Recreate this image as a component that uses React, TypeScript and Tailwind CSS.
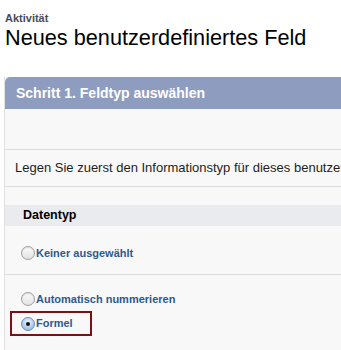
import * as React from "react";

type RadioProps = {
  label: string;
  checked?: boolean;
};

function Radio({ label, checked }: RadioProps) {
  return (
    <label className="flex items-center gap-[1px] cursor-pointer">
      {checked ? (
        <span className="flex h-[14px] w-[14px] items-center justify-center rounded-full border border-[#6a8cbc] bg-[radial-gradient(circle_at_50%_35%,#eef5fd_0%,#b4cdee_55%,#86abdb_100%)]">
          <span className="h-[4px] w-[4px] rounded-full bg-[#111]" />
        </span>
      ) : (
        <span className="h-[14px] w-[14px] rounded-full border border-[#a0a0a0] bg-[linear-gradient(#fbfbfb,#e2e2e2)] shadow-[inset_0_1px_1px_rgba(0,0,0,0.12)]" />
      )}
      <span className="text-[11px] font-bold leading-none text-[#2d5a92]">{label}</span>
    </label>
  );
}

export default function App() {
  return (
    <div className="h-[350px] w-[341px] overflow-hidden bg-white font-['Liberation_Sans',Arial,sans-serif]">
      {/* page title */}
      <div className="px-[5px] pt-[12px]">
        <div className="text-[11px] font-bold leading-[12px] text-[#4b4a57]">Aktivität</div>
        <h1 className="mt-[2px] text-[21.7px] leading-[24px] text-black">Neues benutzerdefiniertes Feld</h1>
      </div>

      {/* step panel */}
      <div className="ml-[4px] mt-[27px] w-[400px] border-l border-[#e0e0e0]">
        <div className="flex h-[32px] items-center rounded-tl-[5px] bg-[#8e9dbf] px-[11px]">
          <h2 className="text-[14px] font-bold text-white">Schritt 1. Feldtyp auswählen</h2>
        </div>

        <div className="bg-[#f8f8f8]">
          <div className="h-[41px] border-b border-[#dcdcdc]" />
          <div className="flex h-[37px] items-center border-b border-[#dcdcdc] px-[10px]">
            <p className="whitespace-nowrap text-[13px] text-[#1e1e1e]">
              Legen Sie zuerst den Informationstyp für dieses benutzerdefinierte Feld fest.
            </p>
          </div>

          <div className="pt-[18px]">
            <div className="flex h-[21px] items-center bg-[#e9ebef] px-[18px]">
              <span className="text-[12.5px] font-bold text-black">Datentyp</span>
            </div>
          </div>

          <div className="border-b border-[#dcdcdc] px-[16px] pb-[14px] pt-[20px]">
            <Radio label="Keiner ausgewählt" />
          </div>

          <div className="flex flex-col gap-[5px] pt-[17px]">
            <div className="px-[16px]">
              <Radio label="Automatisch nummerieren" />
            </div>
            <div className="ml-[5px] flex h-[25px] w-[82px] items-center border-2 border-[#7b1114] px-[9px]">
              <Radio label="Formel" checked />
            </div>
          </div>
          <div className="h-[20px]" />
        </div>
      </div>
    </div>
  );
}
